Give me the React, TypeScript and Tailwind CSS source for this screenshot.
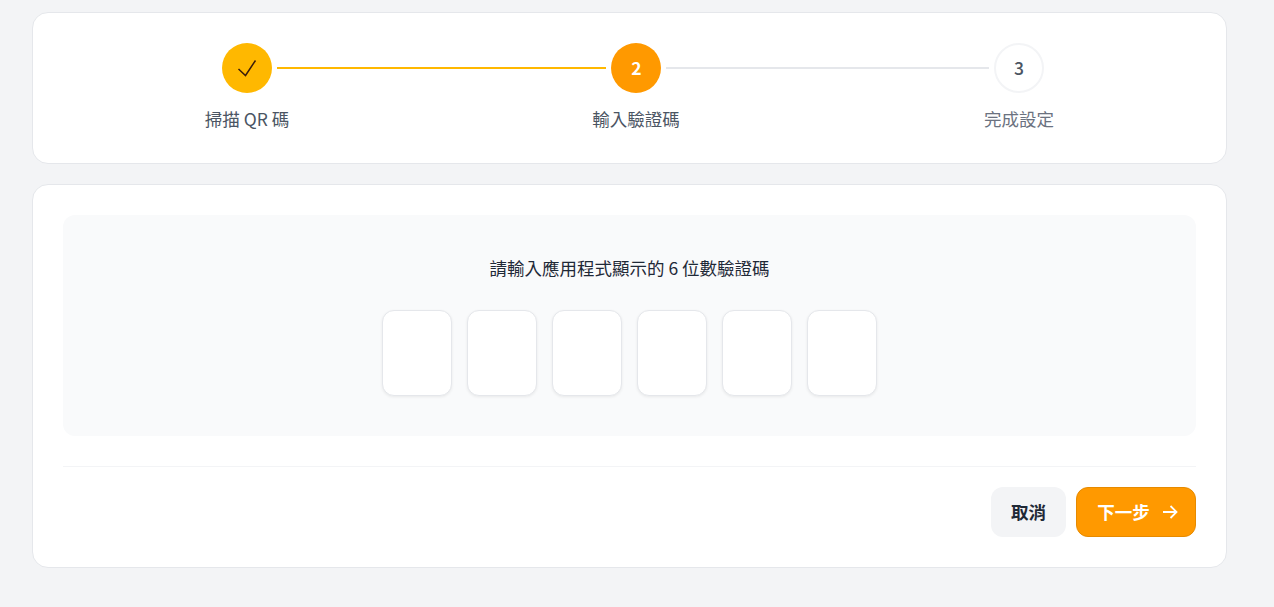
import React from 'react';

const CODE_SLOTS = [0, 1, 2, 3, 4, 5];

const App: React.FC = () => {
  return (
    <div className="min-h-screen bg-[#f3f4f6] pt-3 pl-8 text-[#1f2937] font-['Noto_Sans_CJK_TC','Noto_Sans',sans-serif]">
      <div className="w-[1195px] flex flex-col gap-5">
        {/* stepper */}
        <section className="h-[152px] bg-white border border-[#e5e7eb] rounded-2xl pt-[30px] pl-[189px] flex items-start">
          <div className="w-[50px] flex flex-col items-center">
            <div className="w-[50px] h-[50px] rounded-full bg-[#ffb800] flex items-center justify-center text-[#3b1d0a]">
              <svg width="20" height="18" viewBox="0 0 20 18" fill="none" stroke="currentColor" strokeWidth="1.5">
                <path d="M1.5 10 8.5 16.5 18.5 1.5" />
              </svg>
            </div>
            <span className="mt-[13px] text-[17.5px] leading-[26px] whitespace-nowrap text-[#4b5563]">掃描 QR 碼</span>
          </div>
          <div className="w-[329px] h-[2px] mx-[5px] mt-[24px] bg-[#ffb800]" />
          <div className="w-[50px] flex flex-col items-center">
            <div className="w-[50px] h-[50px] pt-px pl-px rounded-full bg-[#ff9900] flex items-center justify-center text-white text-[17.5px] font-bold">
              2
            </div>
            <span className="mt-[13px] text-[17.5px] leading-[26px] whitespace-nowrap text-[#4b5563]">輸入驗證碼</span>
          </div>
          <div className="w-[323px] h-[2px] mx-[5px] mt-[24px] bg-[#e5e7eb]" />
          <div className="w-[50px] flex flex-col items-center">
            <div className="w-[50px] h-[50px] pt-px rounded-full bg-white border-2 border-[#f3f4f6] flex items-center justify-center text-[#4b5563] text-[17.5px] font-medium">
              3
            </div>
            <span className="mt-[13px] text-[17.5px] leading-[26px] whitespace-nowrap text-[#6b7280]">完成設定</span>
          </div>
        </section>

        {/* code entry */}
        <section className="h-[384px] bg-white border border-[#e5e7eb] rounded-2xl p-[30px]">
          <div className="h-[221px] bg-[#f9fafb] rounded-xl pt-10 flex flex-col items-center">
            <p className="text-[17.5px] leading-[26px] text-[#1f2937]">請輸入應用程式顯示的 6 位數驗證碼</p>
            <div className="mt-[29px] flex gap-[15px]">
              {CODE_SLOTS.map((slot) => (
                <input
                  key={slot}
                  type="text"
                  maxLength={1}
                  className="w-[70px] h-[86px] bg-white border border-[#e5e7eb] rounded-xl shadow-[0_1px_3px_rgba(0,0,0,0.07)] outline-none text-center"
                />
              ))}
            </div>
          </div>
          <div className="mt-[30px] pt-5 border-t border-[#f3f4f6] flex justify-end gap-[10px]">
            <button className="w-[75px] h-[50px] rounded-xl bg-[#f3f4f6] text-[17.5px] font-semibold text-[#1f2937]">取消</button>
            <button className="w-[120px] h-[50px] pl-[3px] rounded-xl bg-[#ff9900] border border-[#e68a00] text-[17.5px] font-semibold text-white flex items-center justify-center gap-[12px]">
              下一步
              <svg width="16" height="14" viewBox="0 0 16 14" fill="none" stroke="currentColor" strokeWidth="1.8">
                <path d="M1 7h13.5M8.5 1 14.5 7 8.5 13" />
              </svg>
            </button>
          </div>
        </section>
      </div>
    </div>
  );
};

export default App;
